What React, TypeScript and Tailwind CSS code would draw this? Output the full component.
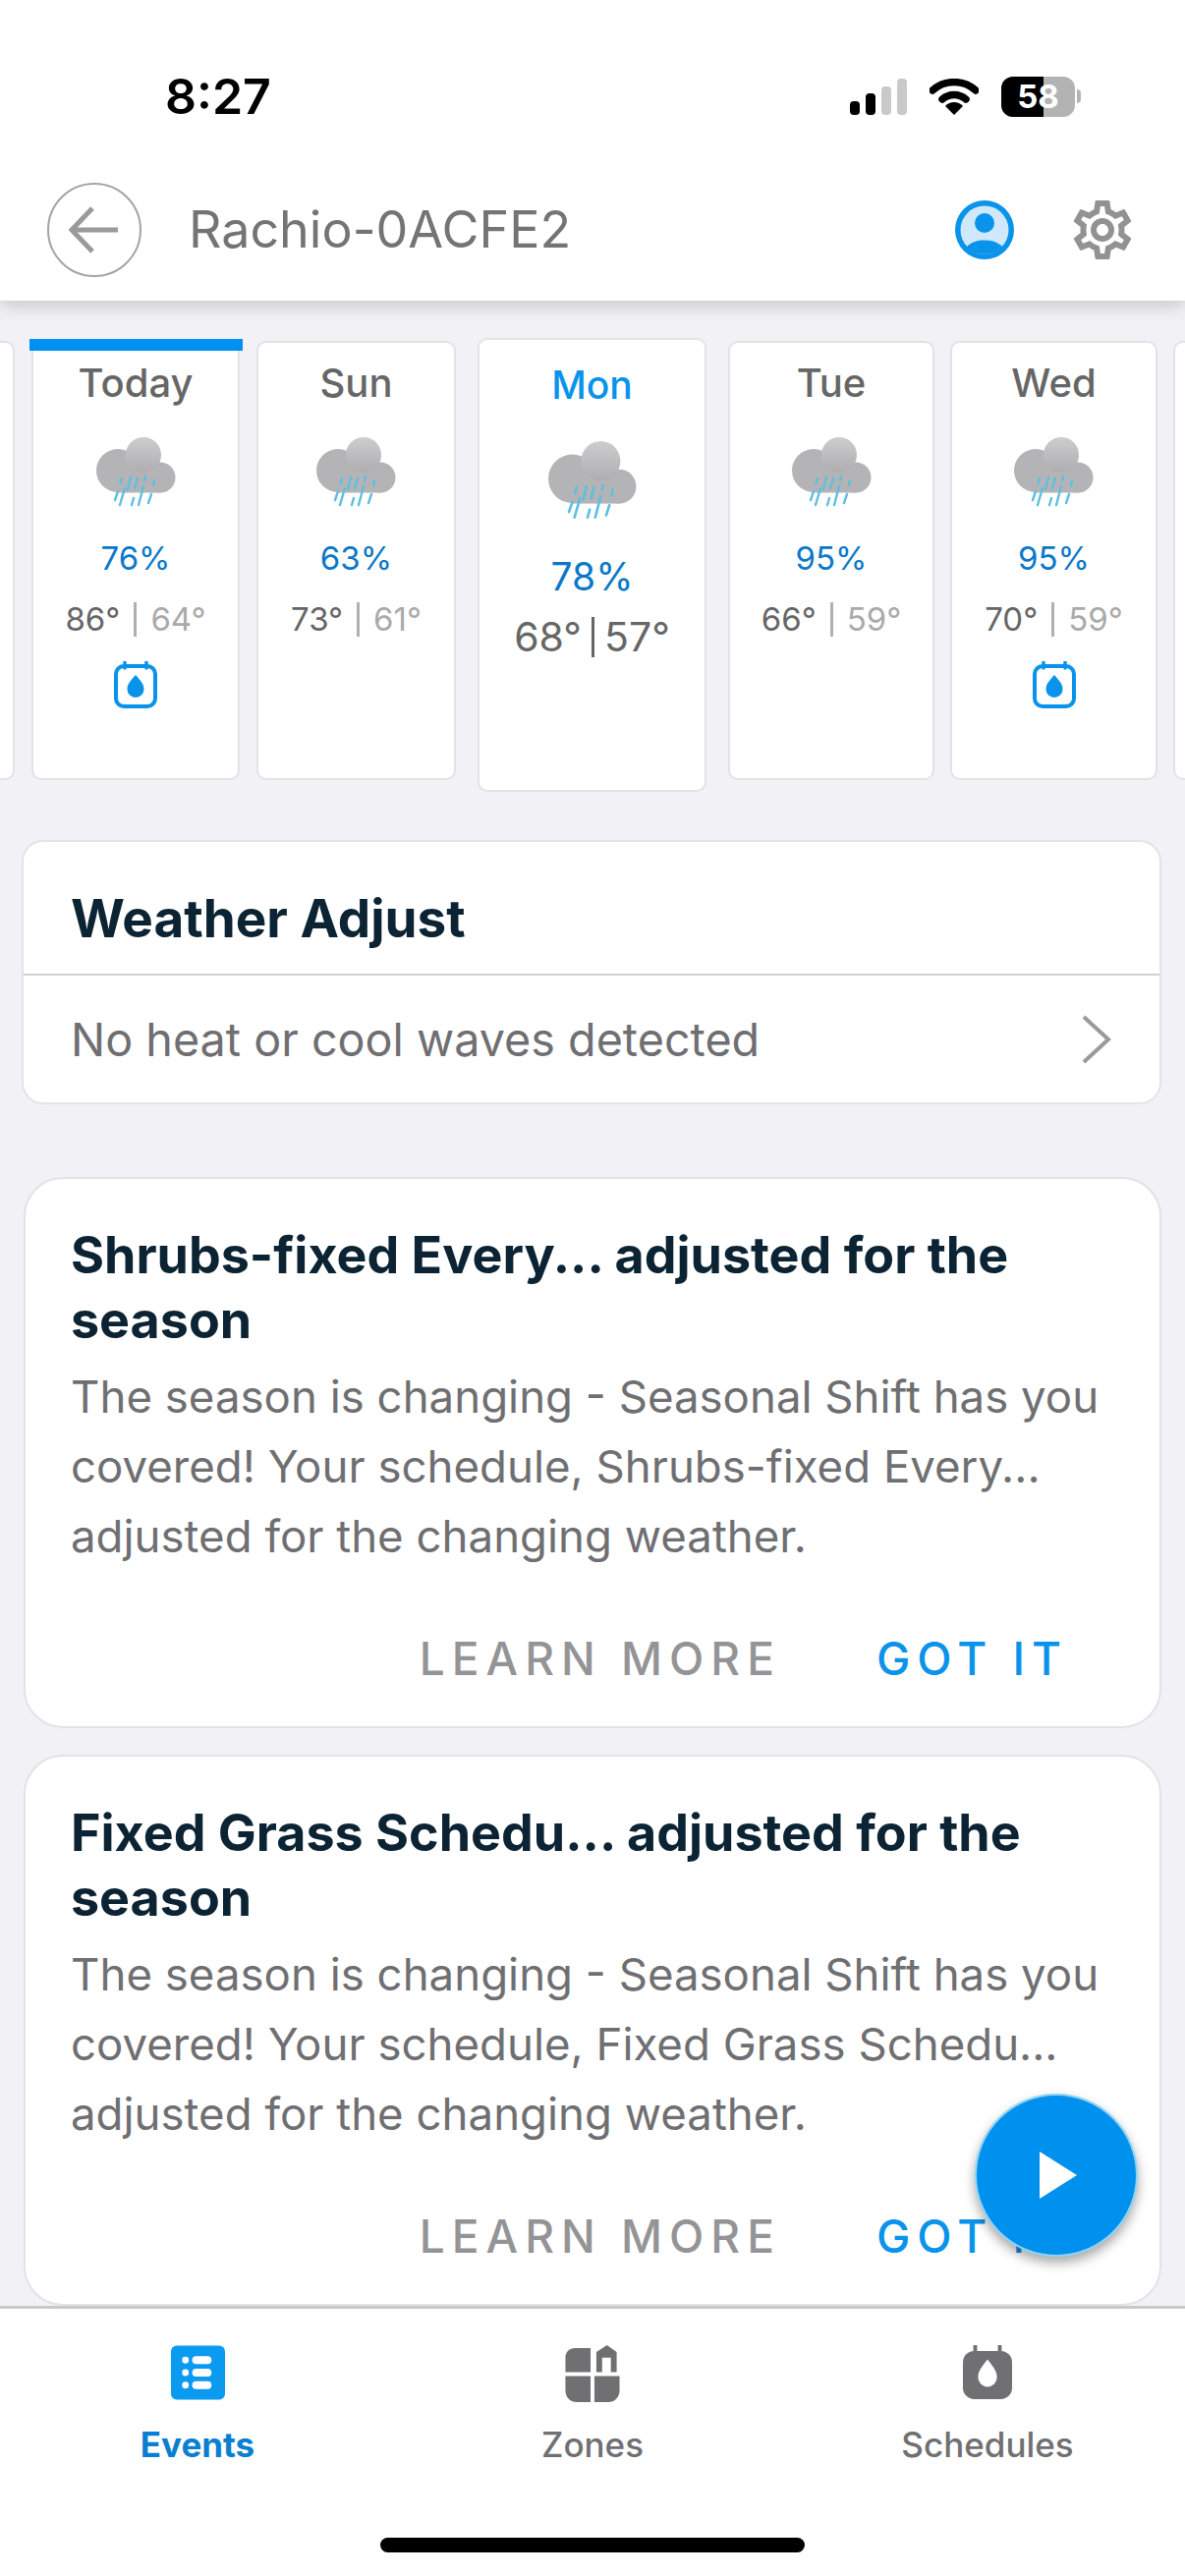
import React from "react";
import { MdOutlineSettings } from "react-icons/md";

const font = "font-['Inter','Liberation_Sans',sans-serif]";

// grey rain cloud, drawn once and scaled for the selected day
function Cloud({ big }: { big?: boolean }) {
    const id = big ? "cloudBig" : "cloudSmall";
    return (
        <svg width={big ? 90 : 81} height={big ? 81 : 72} viewBox="0 0 81 72" preserveAspectRatio="none">
            <defs>
                <linearGradient id={id} x1="0" y1="0" x2="0" y2="1">
                    <stop offset="0" stopColor="#cdcdcf" />
                    <stop offset="1" stopColor="#aeaeb1" />
                </linearGradient>
            </defs>
            <circle cx="22" cy="34" r="22" fill="#b4b4b7" />
            <circle cx="65" cy="41" r="15.5" fill="#b4b4b7" />
            <rect x="22" y="30" width="44" height="26.5" fill="#b4b4b7" />
            <circle cx="48" cy="18" r="18" fill={`url(#${id})`} />
            <g stroke="#5ebfe0" strokeWidth="2.4" strokeLinecap="round">
                <path d="M26 42l-1.500 5M35 41l-3 12M42 42l-3 10M50 40l-1 4M59 44l-1 5" />
                <path d="M22 55l-3 9M29 52l-5 17M38 62l-2 7M48 50l-5 19M56 58l-3 9" />
            </g>
        </svg>
    );
}

function ScheduleIcon() {
    return (
        <svg width="44" height="48" viewBox="0 0 44 48">
            <path d="M11 1v6M33 1v6" stroke="#0a93ea" strokeWidth="3.500" strokeLinecap="round" />
            <rect x="2" y="5" width="40" height="41" rx="8" fill="none" stroke="#0a93ea" strokeWidth="4" />
            <path d="M22 14c5 6 8.500 9 8.500 14.500a8.500 8.500 0 0 1-17 0C13.500 23 17 20 22 14z" fill="#0a93ea" />
        </svg>
    );
}

const days = [
    { name: "Today", pct: "76%", hi: "86°", lo: "64°", water: true, cls: "w-[212px] ml-[17px]" },
    { name: "Sun", pct: "63%", hi: "73°", lo: "61°", water: false, cls: "w-[203px] ml-[17px]" },
    { name: "Mon", pct: "78%", hi: "68°", lo: "57°", water: false, big: true, cls: "w-[233px] ml-[22px]" },
    { name: "Tue", pct: "95%", hi: "66°", lo: "59°", water: false, cls: "w-[210px] ml-[22px]" },
    { name: "Wed", pct: "95%", hi: "70°", lo: "59°", water: true, cls: "w-[211px] ml-[16px]" },
];

function DayCard({ d }: { d: (typeof days)[number] }) {
    if (d.big) {
        return (
            <div className={`${d.cls} h-[462px] shrink-0 rounded-[10px] bg-white border-2 border-[#e3e3e6] flex flex-col items-center pt-[22px]`}>
                <div className="text-[39px] leading-[48px] font-medium text-[#0a93ea]">{d.name}</div>
                <div className="mt-[33px] h-[81px]"><Cloud big /></div>
                <div className="mt-[32px] text-[39px] leading-[50px] text-[#0a78c8]">{d.pct}</div>
                <div className="mt-[11px] text-[41px] leading-[50px] text-[#666] flex items-center">
                    {d.hi}<span className="mx-[10px] w-[3px] h-[41px] bg-[#666]" />{d.lo}
                </div>
            </div>
        );
    }
    return (
        <div className={`${d.cls} relative h-[447px] shrink-0 rounded-[10px] bg-white border-2 border-[#e3e3e6] flex flex-col items-center pt-[15px]`}>
            {d.name === "Today" && <div className="absolute -top-[4px] -left-[4px] -right-[5px] h-[12px] bg-[#0090f0]" />}
            <div className="text-[40px] leading-[52px] font-medium text-[#666]">{d.name}</div>
            <div className="mt-[29px] h-[72px]"><Cloud /></div>
            <div className="mt-[28px] text-[33px] leading-[46px] text-[#0a78c8]">{d.pct}</div>
            <div className="mt-[16px] text-[33px] leading-[46px] text-[#666] flex items-center">
                {d.hi}<span className="mx-[14px] w-[3px] h-[35px] bg-[#b0b0b0]" /><span className="text-[#aaa]">{d.lo}</span>
            </div>
            {d.water && <div className="mt-[20px] h-[48px]"><ScheduleIcon /></div>}
        </div>
    );
}

function EventCard({ name, cls }: { name: string; cls: string }) {
    return (
        <div className={`${cls} mx-[24px] w-[1158px] h-[561px] shrink-0 rounded-[40px] bg-white border-2 border-[#e3e3e6] pl-[46px] pr-[40px] pt-[45px]`}>
            <div className="w-[1040px] text-[52px] leading-[66px] font-bold text-[#0c2333]">
                {`${name} adjusted for the season`}
            </div>
            <div className="mt-[9px] text-[45.6px] leading-[71px] text-[#6f6f72]">
                {`The season is changing - Seasonal Shift has you covered! Your schedule, ${name} adjusted for the changing weather.`}
            </div>
            <div className="mt-[59px] flex justify-end pr-[53px] gap-[97px] text-[46px] leading-[60px] font-medium tracking-[7px]">
                <span className="text-[#949497]">LEARN MORE</span>
                <span className="text-[#0a93ea]">GOT IT</span>
            </div>
        </div>
    );
}

export default function App() {
    return (
        <div className={`${font} relative w-[1206px] h-[2622px] overflow-hidden bg-[#f1f1f6] flex flex-col`}>
            {/* status bar + title */}
            <div className="relative z-10 h-[306px] shrink-0 bg-white shadow-[0_6px_16px_rgba(0,0,0,0.16)]">
                <div className="flex items-center justify-between h-[186px] pt-[10px] pl-[168px] pr-[106px]">
                    <span className="text-[50px] font-semibold text-black">8:27</span>
                    <div className="flex items-center gap-[23px]">
                        <svg width="58" height="37" viewBox="0 0 58 37">
                            <rect x="0" y="23" width="10" height="14" rx="4" fill="#000" />
                            <rect x="16" y="15" width="10" height="22" rx="4" fill="#000" />
                            <rect x="32" y="8" width="10" height="29" rx="4" fill="#c9c9c9" />
                            <rect x="48" y="0" width="10" height="37" rx="4" fill="#c9c9c9" />
                        </svg>
                        <svg width="50" height="37" viewBox="0 0 50 37">
                            <path d="M3 12a33 33 0 0 1 44 0" fill="none" stroke="#000" strokeWidth="7.500" strokeLinecap="round" />
                            <path d="M13 21a18 18 0 0 1 24 0" fill="none" stroke="#000" strokeWidth="7.500" strokeLinecap="round" />
                            <path d="M16 28a12 12 0 0 1 18 0l-9 9z" fill="#000" />
                        </svg>
                        <div className="flex items-center">
                            <div className="relative w-[75px] h-[41px] rounded-[12px] overflow-hidden bg-[#b3b3b3] flex items-center justify-center">
                                <div className="absolute left-0 top-0 bottom-0 w-[43px] bg-black" />
                                <span className="relative text-[33px] leading-none font-bold text-white">58</span>
                            </div>
                            <div className="ml-[2px] w-[4px] h-[14px] rounded-r-full bg-[#b3b3b3]" />
                        </div>
                    </div>
                </div>
                <div className="flex items-center h-[96px] pl-[48px] pr-[54px]">
                    <div className="w-[96px] h-[96px] rounded-full border-2 border-[#a4a4a4] flex items-center justify-center">
                        <svg width="52" height="48" viewBox="0 0 52 48" fill="none" stroke="#9a9a9a" strokeWidth="5">
                            <path d="M2 24h48M24 2L3 24l21 22" />
                        </svg>
                    </div>
                    <span className="ml-[48px] text-[52px] font-normal text-[#747474]">Rachio-0ACFE2</span>
                    <div className="ml-auto flex items-center">
                        <svg width="60" height="60" viewBox="0 0 60 60">
                            <circle cx="30" cy="30" r="30" fill="#0a93ea" />
                            <circle cx="30" cy="30" r="24.500" fill="#cfe8fb" />
                            <circle cx="30" cy="23" r="10" fill="#0a93ea" />
                            <path d="M12 47c5-5 11-6.500 18-6.500s13 1.500 18 6.500a25 25 0 0 1-36 0z" fill="#0a93ea" />
                        </svg>
                        <MdOutlineSettings className="ml-[54px] -mr-[6px] w-[72px] h-[72px] text-[#929292]" />
                    </div>
                </div>
            </div>

            {/* scrolling content */}
            <div className="flex-1 min-h-0 overflow-hidden flex flex-col">
                <div className="flex items-start mt-[38px] -ml-[17px] shrink-0">
                    <div className="w-[32px] h-[447px] mt-[3px] shrink-0 rounded-[10px] bg-white border-2 border-[#e3e3e6]" />
                    {days.map((d) => (
                        <div key={d.name} className={d.big ? "" : "mt-[3px]"}>
                            <DayCard d={d} />
                        </div>
                    ))}
                    <div className="w-[40px] h-[447px] mt-[3px] ml-[16px] shrink-0 rounded-[10px] bg-white border-2 border-[#e3e3e6]" />
                </div>

                <div className="mt-[49px] mx-[22px] w-[1160px] h-[269px] shrink-0 rounded-[22px] bg-white border-2 border-[#e3e3e6]">
                    <div className="h-[136px] pl-[48px] pt-[45px] border-b-2 border-[#d0d0d3] text-[53px] leading-[66px] font-bold text-[#0c2333]">Weather Adjust</div>
                    <div className="h-[130px] pl-[48px] pr-[48px] flex items-center justify-between text-[46.7px] text-[#6f6f72]">
                        <span>No heat or cool waves detected</span>
                        <svg width="32" height="52" viewBox="0 0 32 52" fill="none" stroke="#9a9a9a" strokeWidth="4">
                            <path d="M3 3l25 23L3 49" />
                        </svg>
                    </div>
                </div>

                <EventCard name="Shrubs-fixed Every..." cls="mt-[74px]" />
                <EventCard name="Fixed Grass Schedu..." cls="mt-[27px]" />
            </div>

            {/* play button */}
            <div className="absolute z-20 left-[992px] top-[2131px] w-[166px] h-[166px] rounded-full bg-[#0090ee] border-2 border-[#8fd4f5] shadow-[0_6px_12px_rgba(0,0,0,0.35)] flex items-center justify-center">
                <svg width="38" height="48" viewBox="0 0 38 48" className="ml-[4px]">
                    <path d="M0 0l38 24L0 48z" fill="#fff" />
                </svg>
            </div>

            {/* bottom tabs */}
            <div className="relative z-10 h-[275px] shrink-0 bg-white border-t-[3px] border-[#c9c9cc]">
                <div className="grid grid-cols-3 pt-[37px]">
                    <div className="flex flex-col items-center">
                        <svg width="55" height="56" viewBox="0 0 56 56">
                            <rect width="56" height="56" rx="6" fill="#0a9af0" />
                            <g fill="#fff">
                                <circle cx="15" cy="15" r="3.500" />
                                <circle cx="15" cy="28" r="3.500" />
                                <circle cx="15" cy="41" r="3.500" />
                                <rect x="22" y="11" width="20" height="8" rx="4" />
                                <rect x="22" y="24" width="20" height="8" rx="4" />
                                <rect x="22" y="37" width="20" height="8" rx="4" />
                            </g>
                        </svg>
                        <span className="mt-[21px] text-[35px] leading-[48px] font-bold text-[#0a7fd0]">Events</span>
                    </div>
                    <div className="flex flex-col items-center">
                        <svg width="56" height="58" viewBox="0 0 56 59" fill="#707072">
                            <path d="M10 3h16v25H0V13C0 7 4 3 10 3zM0 32h26v27H12C5 59 0 54 0 47zM30 32h26v15c0 7-5 12-12 12H30zM43 0l10 7v21H47V13H38v15h-6V7z" />
                        </svg>
                        <span className="mt-[19px] text-[35px] leading-[48px] font-medium text-[#707072]">Zones</span>
                    </div>
                    <div className="flex flex-col items-center">
                        <svg width="50" height="56" viewBox="0 0 52 56">
                            <path d="M13 0v7M39 0v7" stroke="#707072" strokeWidth="4" strokeLinecap="round" />
                            <rect y="5" width="52" height="51" rx="12" fill="#707072" />
                            <path d="M26 14c7 9 10 13 10 19a10 10 0 0 1-20 0c0-6 3-10 10-19z" fill="#fff" />
                        </svg>
                        <span className="mt-[21px] text-[35px] leading-[48px] font-medium text-[#707072]">Schedules</span>
                    </div>
                </div>
                <div className="absolute left-[387px] top-[233px] w-[432px] h-[15px] rounded-full bg-black" />
            </div>
        </div>
    );
}
